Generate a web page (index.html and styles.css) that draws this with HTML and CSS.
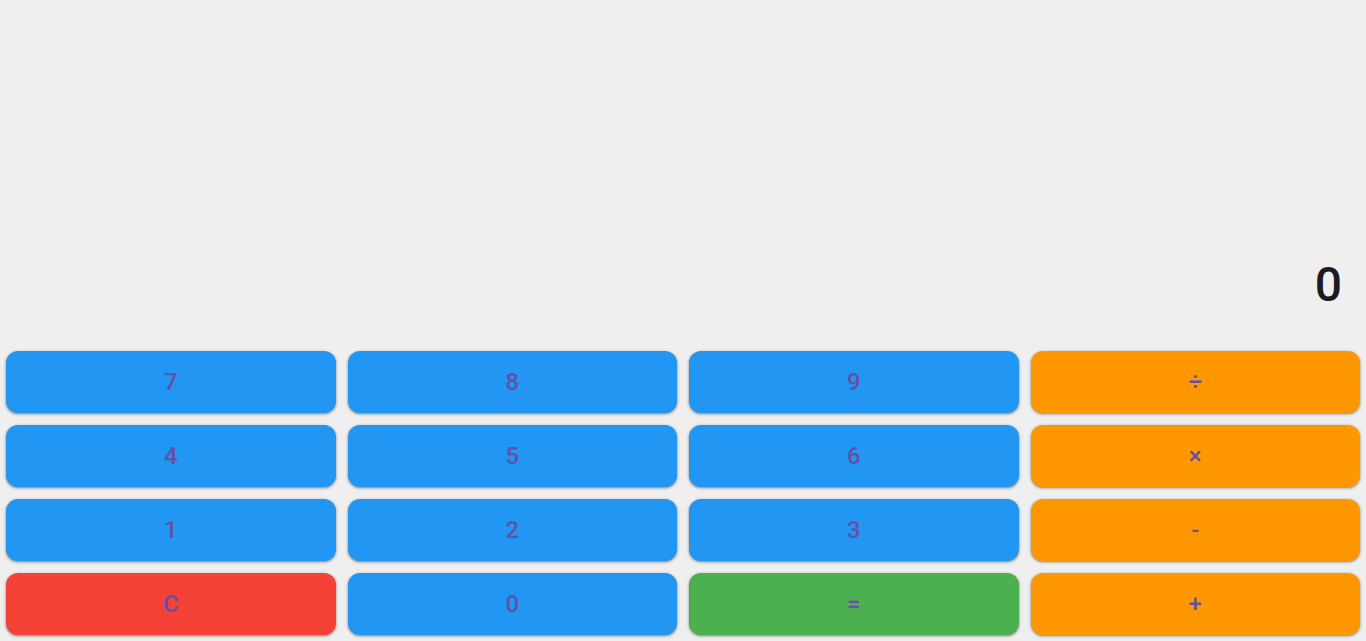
FILE: index.html
```html
<!DOCTYPE html>
<html>
<head>
<meta charset="utf-8">
<link rel="stylesheet" href="styles.css">
</head>
<body>
<div class="app">
  <div class="display"><span class="value">0</span></div>
  <div class="keys">
    <button class="key num">7</button>
    <button class="key num">8</button>
    <button class="key num">9</button>
    <button class="key op">÷</button>
    <button class="key num">4</button>
    <button class="key num">5</button>
    <button class="key num">6</button>
    <button class="key op">×</button>
    <button class="key num">1</button>
    <button class="key num">2</button>
    <button class="key num">3</button>
    <button class="key op">-</button>
    <button class="key clear">C</button>
    <button class="key num">0</button>
    <button class="key equals">=</button>
    <button class="key op">+</button>
  </div>
</div>
</body>
</html>
```
FILE: styles.css
```css
html, body {
  margin: 0;
  padding: 0;
  height: 100%;
  background: #efefef;
  font-family: Roboto, "Noto Sans", sans-serif;
}
.app {
  display: flex;
  flex-direction: column;
  height: 641px;
}
.display {
  flex: 1;
  display: flex;
  justify-content: flex-end;
  align-items: flex-end;
  padding: 24px 24px 32px 24px;
}
.value {
  font-size: 48px;
  font-weight: 500;
  line-height: 56px;
  color: #1c1b1f;
}
.keys {
  display: grid;
  grid-template-columns: repeat(4, 1fr);
  grid-auto-rows: 62px;
  gap: 12px;
  padding: 6px;
}
.key {
  border: none;
  border-radius: 12px;
  font-family: Roboto, "Noto Sans", sans-serif;
  font-size: 24px;
  font-weight: 500;
  color: #6750a4;
  box-shadow: 0 1px 2px rgba(0,0,0,0.3), 0 1px 3px 1px rgba(0,0,0,0.15);
  padding: 0;
  cursor: pointer;
}
.num { background: #2196f3; }
.op { background: #ff9800; }
.clear { background: #f44336; }
.equals { background: #4caf50; }
```
